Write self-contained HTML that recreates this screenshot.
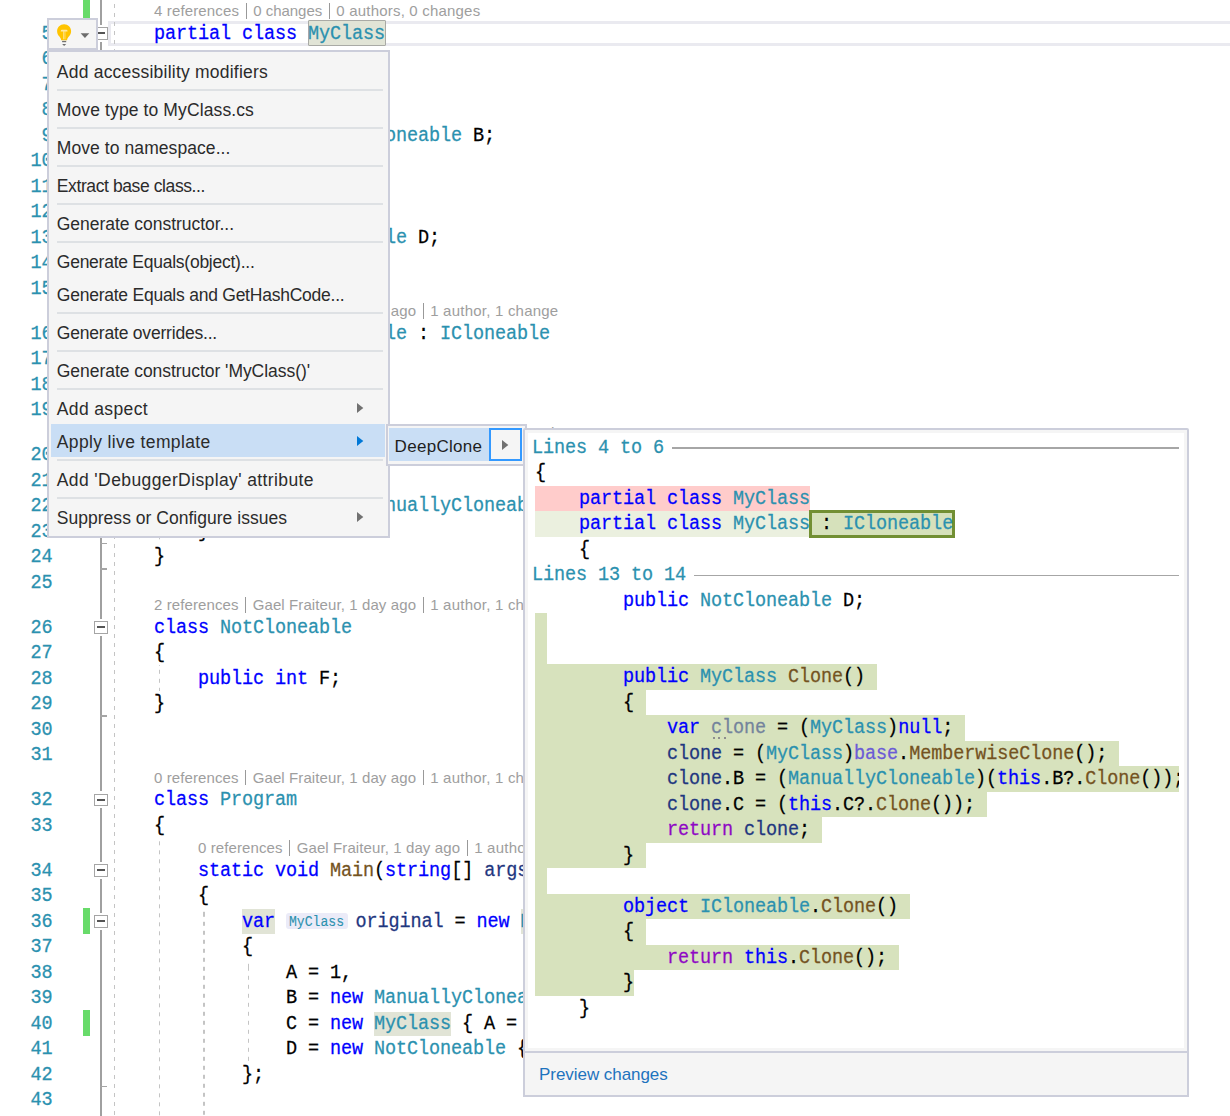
<!DOCTYPE html><html><head><meta charset="utf-8"><style>
html,body{margin:0;padding:0;background:#fff;width:1230px;height:1116px;overflow:hidden;position:relative}
.m{position:absolute;font-family:'Liberation Mono',monospace;line-height:1;white-space:pre;color:#000;-webkit-text-stroke:0.25px currentColor}
.s{position:absolute;font-family:'Liberation Sans',sans-serif;line-height:1;white-space:pre}
.r{position:absolute}
</style></head><body>
<div class="r" style="left:108px;top:21px;width:1130px;height:19px;border:3px solid #EAEAF0;border-right:none"></div>
<div class="r" style="left:307.5px;top:20px;width:76px;height:24px;background:#E1E4D6;border:1px solid #A9AAA5;border-radius:1px"></div>
<div class="r" style="left:242.00px;top:908.70px;width:33.00px;height:25.00px;background:#E1E4D6;"></div>
<div class="r" style="left:374.00px;top:1011.70px;width:77.00px;height:24.00px;background:#E1E4D6;"></div>
<div class="r" style="left:520.50px;top:908.70px;width:39.50px;height:25.00px;background:#E1E4D6;"></div>
<div class="r" style="left:286.00px;top:912.70px;width:62.00px;height:16.70px;background:#EBEBF8;border-radius:3px"></div>
<div class="m" style="left:289.00px;top:915.56px;font-size:13.1px;letter-spacing:0.000px;transform:scaleY(1.07);transform-origin:0 10.04px;-webkit-text-stroke:0.1px currentColor"><span style="color:#2B91AF">MyClass</span></div>
<div class="m" style="left:41.50px;top:25.73px;font-size:18.5px;letter-spacing:-0.100px;transform:scaleY(1.07);transform-origin:0 14.17px;"><span style="color:#2B91AF">5</span></div>
<div class="m" style="left:41.50px;top:51.23px;font-size:18.5px;letter-spacing:-0.100px;transform:scaleY(1.07);transform-origin:0 14.17px;"><span style="color:#2B91AF">6</span></div>
<div class="m" style="left:41.50px;top:76.73px;font-size:18.5px;letter-spacing:-0.100px;transform:scaleY(1.07);transform-origin:0 14.17px;"><span style="color:#2B91AF">7</span></div>
<div class="m" style="left:41.50px;top:102.23px;font-size:18.5px;letter-spacing:-0.100px;transform:scaleY(1.07);transform-origin:0 14.17px;"><span style="color:#2B91AF">8</span></div>
<div class="m" style="left:41.50px;top:127.73px;font-size:18.5px;letter-spacing:-0.100px;transform:scaleY(1.07);transform-origin:0 14.17px;"><span style="color:#2B91AF">9</span></div>
<div class="m" style="left:30.50px;top:153.23px;font-size:18.5px;letter-spacing:-0.100px;transform:scaleY(1.07);transform-origin:0 14.17px;"><span style="color:#2B91AF">10</span></div>
<div class="m" style="left:30.50px;top:178.73px;font-size:18.5px;letter-spacing:-0.100px;transform:scaleY(1.07);transform-origin:0 14.17px;"><span style="color:#2B91AF">11</span></div>
<div class="m" style="left:30.50px;top:204.23px;font-size:18.5px;letter-spacing:-0.100px;transform:scaleY(1.07);transform-origin:0 14.17px;"><span style="color:#2B91AF">12</span></div>
<div class="m" style="left:30.50px;top:229.73px;font-size:18.5px;letter-spacing:-0.100px;transform:scaleY(1.07);transform-origin:0 14.17px;"><span style="color:#2B91AF">13</span></div>
<div class="m" style="left:30.50px;top:255.23px;font-size:18.5px;letter-spacing:-0.100px;transform:scaleY(1.07);transform-origin:0 14.17px;"><span style="color:#2B91AF">14</span></div>
<div class="m" style="left:30.50px;top:280.73px;font-size:18.5px;letter-spacing:-0.100px;transform:scaleY(1.07);transform-origin:0 14.17px;"><span style="color:#2B91AF">15</span></div>
<div class="m" style="left:30.50px;top:325.73px;font-size:18.5px;letter-spacing:-0.100px;transform:scaleY(1.07);transform-origin:0 14.17px;"><span style="color:#2B91AF">16</span></div>
<div class="m" style="left:30.50px;top:351.23px;font-size:18.5px;letter-spacing:-0.100px;transform:scaleY(1.07);transform-origin:0 14.17px;"><span style="color:#2B91AF">17</span></div>
<div class="m" style="left:30.50px;top:376.73px;font-size:18.5px;letter-spacing:-0.100px;transform:scaleY(1.07);transform-origin:0 14.17px;"><span style="color:#2B91AF">18</span></div>
<div class="m" style="left:30.50px;top:402.23px;font-size:18.5px;letter-spacing:-0.100px;transform:scaleY(1.07);transform-origin:0 14.17px;"><span style="color:#2B91AF">19</span></div>
<div class="m" style="left:30.50px;top:447.23px;font-size:18.5px;letter-spacing:-0.100px;transform:scaleY(1.07);transform-origin:0 14.17px;"><span style="color:#2B91AF">20</span></div>
<div class="m" style="left:30.50px;top:472.73px;font-size:18.5px;letter-spacing:-0.100px;transform:scaleY(1.07);transform-origin:0 14.17px;"><span style="color:#2B91AF">21</span></div>
<div class="m" style="left:30.50px;top:498.23px;font-size:18.5px;letter-spacing:-0.100px;transform:scaleY(1.07);transform-origin:0 14.17px;"><span style="color:#2B91AF">22</span></div>
<div class="m" style="left:30.50px;top:523.73px;font-size:18.5px;letter-spacing:-0.100px;transform:scaleY(1.07);transform-origin:0 14.17px;"><span style="color:#2B91AF">23</span></div>
<div class="m" style="left:30.50px;top:549.23px;font-size:18.5px;letter-spacing:-0.100px;transform:scaleY(1.07);transform-origin:0 14.17px;"><span style="color:#2B91AF">24</span></div>
<div class="m" style="left:30.50px;top:574.73px;font-size:18.5px;letter-spacing:-0.100px;transform:scaleY(1.07);transform-origin:0 14.17px;"><span style="color:#2B91AF">25</span></div>
<div class="m" style="left:30.50px;top:619.73px;font-size:18.5px;letter-spacing:-0.100px;transform:scaleY(1.07);transform-origin:0 14.17px;"><span style="color:#2B91AF">26</span></div>
<div class="m" style="left:30.50px;top:645.23px;font-size:18.5px;letter-spacing:-0.100px;transform:scaleY(1.07);transform-origin:0 14.17px;"><span style="color:#2B91AF">27</span></div>
<div class="m" style="left:30.50px;top:670.73px;font-size:18.5px;letter-spacing:-0.100px;transform:scaleY(1.07);transform-origin:0 14.17px;"><span style="color:#2B91AF">28</span></div>
<div class="m" style="left:30.50px;top:696.23px;font-size:18.5px;letter-spacing:-0.100px;transform:scaleY(1.07);transform-origin:0 14.17px;"><span style="color:#2B91AF">29</span></div>
<div class="m" style="left:30.50px;top:721.73px;font-size:18.5px;letter-spacing:-0.100px;transform:scaleY(1.07);transform-origin:0 14.17px;"><span style="color:#2B91AF">30</span></div>
<div class="m" style="left:30.50px;top:747.23px;font-size:18.5px;letter-spacing:-0.100px;transform:scaleY(1.07);transform-origin:0 14.17px;"><span style="color:#2B91AF">31</span></div>
<div class="m" style="left:30.50px;top:792.23px;font-size:18.5px;letter-spacing:-0.100px;transform:scaleY(1.07);transform-origin:0 14.17px;"><span style="color:#2B91AF">32</span></div>
<div class="m" style="left:30.50px;top:817.73px;font-size:18.5px;letter-spacing:-0.100px;transform:scaleY(1.07);transform-origin:0 14.17px;"><span style="color:#2B91AF">33</span></div>
<div class="m" style="left:30.50px;top:862.73px;font-size:18.5px;letter-spacing:-0.100px;transform:scaleY(1.07);transform-origin:0 14.17px;"><span style="color:#2B91AF">34</span></div>
<div class="m" style="left:30.50px;top:888.23px;font-size:18.5px;letter-spacing:-0.100px;transform:scaleY(1.07);transform-origin:0 14.17px;"><span style="color:#2B91AF">35</span></div>
<div class="m" style="left:30.50px;top:913.73px;font-size:18.5px;letter-spacing:-0.100px;transform:scaleY(1.07);transform-origin:0 14.17px;"><span style="color:#2B91AF">36</span></div>
<div class="m" style="left:30.50px;top:939.23px;font-size:18.5px;letter-spacing:-0.100px;transform:scaleY(1.07);transform-origin:0 14.17px;"><span style="color:#2B91AF">37</span></div>
<div class="m" style="left:30.50px;top:964.73px;font-size:18.5px;letter-spacing:-0.100px;transform:scaleY(1.07);transform-origin:0 14.17px;"><span style="color:#2B91AF">38</span></div>
<div class="m" style="left:30.50px;top:990.23px;font-size:18.5px;letter-spacing:-0.100px;transform:scaleY(1.07);transform-origin:0 14.17px;"><span style="color:#2B91AF">39</span></div>
<div class="m" style="left:30.50px;top:1015.73px;font-size:18.5px;letter-spacing:-0.100px;transform:scaleY(1.07);transform-origin:0 14.17px;"><span style="color:#2B91AF">40</span></div>
<div class="m" style="left:30.50px;top:1041.23px;font-size:18.5px;letter-spacing:-0.100px;transform:scaleY(1.07);transform-origin:0 14.17px;"><span style="color:#2B91AF">41</span></div>
<div class="m" style="left:30.50px;top:1066.73px;font-size:18.5px;letter-spacing:-0.100px;transform:scaleY(1.07);transform-origin:0 14.17px;"><span style="color:#2B91AF">42</span></div>
<div class="m" style="left:30.50px;top:1092.23px;font-size:18.5px;letter-spacing:-0.100px;transform:scaleY(1.07);transform-origin:0 14.17px;"><span style="color:#2B91AF">43</span></div>
<div class="m" style="left:154.00px;top:25.73px;font-size:18.5px;letter-spacing:-0.100px;transform:scaleY(1.07);transform-origin:0 14.17px;"><span style="color:#0000FF">partial</span> <span style="color:#0000FF">class</span> <span style="color:#2B91AF">MyClass</span></div>
<div class="s" style="left:154.00px;top:3.40px;font-size:15px;color:#9E9E9E;"><span style="letter-spacing:0.142px">4 references</span><span style="display:inline-block;width:1.1px;height:15.3px;background:#999999;margin:0 6.2px 0 6.8px;vertical-align:-2px;letter-spacing:0"></span><span style="letter-spacing:-0.015px">0 changes</span><span style="display:inline-block;width:1.1px;height:15.3px;background:#999999;margin:0 6.2px 0 6.8px;vertical-align:-2px;letter-spacing:0"></span><span style="letter-spacing:0.195px">0 authors, 0 changes</span></div>
<div class="m" style="left:154.00px;top:76.73px;font-size:18.5px;letter-spacing:-0.100px;transform:scaleY(1.07);transform-origin:0 14.17px;">    <span style="color:#0000FF">public</span> <span style="color:#0000FF">int</span><span style="color:#000000"> A;</span></div>
<div class="m" style="left:154.00px;top:127.73px;font-size:18.5px;letter-spacing:-0.100px;transform:scaleY(1.07);transform-origin:0 14.17px;">    <span style="color:#0000FF">public</span> <span style="color:#2B91AF">ManuallyCloneable</span><span style="color:#000000"> B;</span></div>
<div class="m" style="left:154.00px;top:178.73px;font-size:18.5px;letter-spacing:-0.100px;transform:scaleY(1.07);transform-origin:0 14.17px;">    <span style="color:#0000FF">public</span> <span style="color:#2B91AF">MyClass</span><span style="color:#000000"> C;</span></div>
<div class="m" style="left:154.00px;top:229.73px;font-size:18.5px;letter-spacing:-0.100px;transform:scaleY(1.07);transform-origin:0 14.17px;">    <span style="color:#0000FF">public</span> <span style="color:#2B91AF">NotCloneable</span><span style="color:#000000"> D;</span></div>
<div class="m" style="left:154.00px;top:255.23px;font-size:18.5px;letter-spacing:-0.100px;transform:scaleY(1.07);transform-origin:0 14.17px;"><span style="color:#000000">}</span></div>
<div class="m" style="left:154.00px;top:325.73px;font-size:18.5px;letter-spacing:-0.100px;transform:scaleY(1.07);transform-origin:0 14.17px;"><span style="color:#0000FF">class</span> <span style="color:#2B91AF">ManuallyCloneable</span><span style="color:#000000"> : </span><span style="color:#2B91AF">ICloneable</span></div>
<div class="s" style="left:154.00px;top:303.40px;font-size:15px;color:#9E9E9E;"><span style="letter-spacing:0.101px">2 references</span><span style="display:inline-block;width:1.1px;height:15.3px;background:#999999;margin:0 6.2px 0 6.8px;vertical-align:-2px;letter-spacing:0"></span><span style="letter-spacing:0.103px">Gael Fraiteur, 1 day ago</span><span style="display:inline-block;width:1.1px;height:15.3px;background:#999999;margin:0 6.2px 0 6.8px;vertical-align:-2px;letter-spacing:0"></span><span style="letter-spacing:0.223px">1 author, 1 change</span></div>
<div class="m" style="left:154.00px;top:351.23px;font-size:18.5px;letter-spacing:-0.100px;transform:scaleY(1.07);transform-origin:0 14.17px;"><span style="color:#000000">{</span></div>
<div class="m" style="left:154.00px;top:376.73px;font-size:18.5px;letter-spacing:-0.100px;transform:scaleY(1.07);transform-origin:0 14.17px;">    <span style="color:#0000FF">public</span> <span style="color:#0000FF">int</span><span style="color:#000000"> E;</span></div>
<div class="m" style="left:154.00px;top:447.23px;font-size:18.5px;letter-spacing:-0.100px;transform:scaleY(1.07);transform-origin:0 14.17px;">    <span style="color:#0000FF">public</span> <span style="color:#0000FF">object</span> <span style="color:#74531F">Clone</span><span style="color:#000000">()</span></div>
<div class="s" style="left:198.00px;top:424.90px;font-size:15px;color:#9E9E9E;"><span style="letter-spacing:0.000px">1 reference</span><span style="display:inline-block;width:1.1px;height:15.3px;background:#999999;margin:0 6.2px 0 6.8px;vertical-align:-2px;letter-spacing:0"></span><span style="letter-spacing:0.103px">Gael Fraiteur, 1 day ago</span><span style="display:inline-block;width:1.1px;height:15.3px;background:#999999;margin:0 6.2px 0 6.8px;vertical-align:-2px;letter-spacing:0"></span><span style="letter-spacing:0.223px">1 author, 1 change</span></div>
<div class="m" style="left:154.00px;top:472.73px;font-size:18.5px;letter-spacing:-0.100px;transform:scaleY(1.07);transform-origin:0 14.17px;">    <span style="color:#000000">{</span></div>
<div class="m" style="left:154.00px;top:498.23px;font-size:18.5px;letter-spacing:-0.100px;transform:scaleY(1.07);transform-origin:0 14.17px;">        <span style="color:#8F08C4">return</span> <span style="color:#0000FF">new</span> <span style="color:#2B91AF">ManuallyCloneable</span><span style="color:#000000">();</span></div>
<div class="m" style="left:154.00px;top:523.73px;font-size:18.5px;letter-spacing:-0.100px;transform:scaleY(1.07);transform-origin:0 14.17px;">    <span style="color:#000000">}</span></div>
<div class="m" style="left:154.00px;top:549.23px;font-size:18.5px;letter-spacing:-0.100px;transform:scaleY(1.07);transform-origin:0 14.17px;"><span style="color:#000000">}</span></div>
<div class="m" style="left:154.00px;top:619.73px;font-size:18.5px;letter-spacing:-0.100px;transform:scaleY(1.07);transform-origin:0 14.17px;"><span style="color:#0000FF">class</span> <span style="color:#2B91AF">NotCloneable</span></div>
<div class="s" style="left:154.00px;top:597.40px;font-size:15px;color:#9E9E9E;"><span style="letter-spacing:0.101px">2 references</span><span style="display:inline-block;width:1.1px;height:15.3px;background:#999999;margin:0 6.2px 0 6.8px;vertical-align:-2px;letter-spacing:0"></span><span style="letter-spacing:0.103px">Gael Fraiteur, 1 day ago</span><span style="display:inline-block;width:1.1px;height:15.3px;background:#999999;margin:0 6.2px 0 6.8px;vertical-align:-2px;letter-spacing:0"></span><span style="letter-spacing:0.223px">1 author, 1 change</span></div>
<div class="m" style="left:154.00px;top:645.23px;font-size:18.5px;letter-spacing:-0.100px;transform:scaleY(1.07);transform-origin:0 14.17px;"><span style="color:#000000">{</span></div>
<div class="m" style="left:154.00px;top:670.73px;font-size:18.5px;letter-spacing:-0.100px;transform:scaleY(1.07);transform-origin:0 14.17px;">    <span style="color:#0000FF">public</span> <span style="color:#0000FF">int</span><span style="color:#000000"> F;</span></div>
<div class="m" style="left:154.00px;top:696.23px;font-size:18.5px;letter-spacing:-0.100px;transform:scaleY(1.07);transform-origin:0 14.17px;"><span style="color:#000000">}</span></div>
<div class="m" style="left:154.00px;top:792.23px;font-size:18.5px;letter-spacing:-0.100px;transform:scaleY(1.07);transform-origin:0 14.17px;"><span style="color:#0000FF">class</span> <span style="color:#2B91AF">Program</span></div>
<div class="s" style="left:154.00px;top:769.90px;font-size:15px;color:#9E9E9E;"><span style="letter-spacing:0.101px">0 references</span><span style="display:inline-block;width:1.1px;height:15.3px;background:#999999;margin:0 6.2px 0 6.8px;vertical-align:-2px;letter-spacing:0"></span><span style="letter-spacing:0.103px">Gael Fraiteur, 1 day ago</span><span style="display:inline-block;width:1.1px;height:15.3px;background:#999999;margin:0 6.2px 0 6.8px;vertical-align:-2px;letter-spacing:0"></span><span style="letter-spacing:0.223px">1 author, 1 change</span></div>
<div class="m" style="left:154.00px;top:817.73px;font-size:18.5px;letter-spacing:-0.100px;transform:scaleY(1.07);transform-origin:0 14.17px;"><span style="color:#000000">{</span></div>
<div class="m" style="left:154.00px;top:862.73px;font-size:18.5px;letter-spacing:-0.100px;transform:scaleY(1.07);transform-origin:0 14.17px;">    <span style="color:#0000FF">static</span> <span style="color:#0000FF">void</span> <span style="color:#74531F">Main</span><span style="color:#000000">(</span><span style="color:#0000FF">string</span><span style="color:#000000">[] </span><span style="color:#1F377F">args</span><span style="color:#000000">)</span></div>
<div class="s" style="left:198.00px;top:840.40px;font-size:15px;color:#9E9E9E;"><span style="letter-spacing:0.101px">0 references</span><span style="display:inline-block;width:1.1px;height:15.3px;background:#999999;margin:0 6.2px 0 6.8px;vertical-align:-2px;letter-spacing:0"></span><span style="letter-spacing:0.103px">Gael Fraiteur, 1 day ago</span><span style="display:inline-block;width:1.1px;height:15.3px;background:#999999;margin:0 6.2px 0 6.8px;vertical-align:-2px;letter-spacing:0"></span><span style="letter-spacing:0.223px">1 author, 1 change</span></div>
<div class="m" style="left:154.00px;top:888.23px;font-size:18.5px;letter-spacing:-0.100px;transform:scaleY(1.07);transform-origin:0 14.17px;">    <span style="color:#000000">{</span></div>
<div class="m" style="left:154.00px;top:913.73px;font-size:18.5px;letter-spacing:-0.100px;transform:scaleY(1.07);transform-origin:0 14.17px;">        <span style="color:#0000FF">var</span></div>
<div class="m" style="left:154.00px;top:939.23px;font-size:18.5px;letter-spacing:-0.100px;transform:scaleY(1.07);transform-origin:0 14.17px;">        <span style="color:#000000">{</span></div>
<div class="m" style="left:154.00px;top:964.73px;font-size:18.5px;letter-spacing:-0.100px;transform:scaleY(1.07);transform-origin:0 14.17px;">            <span style="color:#000000">A = 1,</span></div>
<div class="m" style="left:154.00px;top:990.23px;font-size:18.5px;letter-spacing:-0.100px;transform:scaleY(1.07);transform-origin:0 14.17px;">            <span style="color:#000000">B = </span><span style="color:#0000FF">new</span> <span style="color:#2B91AF">ManuallyCloneable</span><span style="color:#000000"> { A = 2 },</span></div>
<div class="m" style="left:154.00px;top:1015.73px;font-size:18.5px;letter-spacing:-0.100px;transform:scaleY(1.07);transform-origin:0 14.17px;">            <span style="color:#000000">C = </span><span style="color:#0000FF">new</span> <span style="color:#2B91AF">MyClass</span><span style="color:#000000"> { A = 3 },</span></div>
<div class="m" style="left:154.00px;top:1041.23px;font-size:18.5px;letter-spacing:-0.100px;transform:scaleY(1.07);transform-origin:0 14.17px;">            <span style="color:#000000">D = </span><span style="color:#0000FF">new</span> <span style="color:#2B91AF">NotCloneable</span><span style="color:#000000"> { F = 4 }</span></div>
<div class="m" style="left:154.00px;top:1066.73px;font-size:18.5px;letter-spacing:-0.100px;transform:scaleY(1.07);transform-origin:0 14.17px;">        <span style="color:#000000">};</span></div>
<div class="r" style="left:83.00px;top:0.00px;width:7.00px;height:18.00px;background:#68DB6A;"></div>
<div class="r" style="left:83.00px;top:908.20px;width:7.00px;height:25.50px;background:#68DB6A;"></div>
<div class="r" style="left:83.00px;top:1010.20px;width:7.00px;height:25.50px;background:#68DB6A;"></div>
<div class="r" style="left:100.40px;top:0.00px;width:1.50px;height:1116.00px;background:#A0A0A0;"></div>
<div class="r" style="left:99.00px;top:24.50px;width:4.50px;height:17.20px;background:#FFFFFF;"></div>
<div class="r" style="left:94px;top:27.20px;width:11.5px;height:10.6px;border:1px solid #A5A5A5;background:#fff"></div>
<div class="r" style="left:97.20px;top:32.30px;width:7.70px;height:1.80px;background:#555555;"></div>
<div class="r" style="left:99.00px;top:618.50px;width:4.50px;height:17.20px;background:#FFFFFF;"></div>
<div class="r" style="left:94px;top:621.20px;width:11.5px;height:10.6px;border:1px solid #A5A5A5;background:#fff"></div>
<div class="r" style="left:97.20px;top:626.30px;width:7.70px;height:1.80px;background:#555555;"></div>
<div class="r" style="left:99.00px;top:791.00px;width:4.50px;height:17.20px;background:#FFFFFF;"></div>
<div class="r" style="left:94px;top:793.70px;width:11.5px;height:10.6px;border:1px solid #A5A5A5;background:#fff"></div>
<div class="r" style="left:97.20px;top:798.80px;width:7.70px;height:1.80px;background:#555555;"></div>
<div class="r" style="left:99.00px;top:861.50px;width:4.50px;height:17.20px;background:#FFFFFF;"></div>
<div class="r" style="left:94px;top:864.20px;width:11.5px;height:10.6px;border:1px solid #A5A5A5;background:#fff"></div>
<div class="r" style="left:97.20px;top:869.30px;width:7.70px;height:1.80px;background:#555555;"></div>
<div class="r" style="left:99.00px;top:912.50px;width:4.50px;height:17.20px;background:#FFFFFF;"></div>
<div class="r" style="left:94px;top:915.20px;width:11.5px;height:10.6px;border:1px solid #A5A5A5;background:#fff"></div>
<div class="r" style="left:97.20px;top:920.30px;width:7.70px;height:1.80px;background:#555555;"></div>
<div class="r" style="left:100.00px;top:542.90px;width:7.00px;height:1.20px;background:#A5A5A5;"></div>
<div class="r" style="left:100.00px;top:568.40px;width:7.00px;height:1.20px;background:#A5A5A5;"></div>
<div class="r" style="left:100.00px;top:715.40px;width:7.00px;height:1.20px;background:#A5A5A5;"></div>
<div class="r" style="left:100.00px;top:1085.90px;width:7.00px;height:1.20px;background:#A5A5A5;"></div>
<div class="r" style="left:113.50px;top:0.00px;width:1.5px;height:1116.00px;background:repeating-linear-gradient(to bottom,#C4C4C4 0,#C4C4C4 4.5px,transparent 4.5px,transparent 9px);background-position:0 4.00px"></div>
<div class="r" style="left:158.50px;top:665.20px;width:1.5px;height:25.50px;background:repeating-linear-gradient(to bottom,#C4C4C4 0,#C4C4C4 4.5px,transparent 4.5px,transparent 9px);background-position:0 4.80px"></div>
<div class="r" style="left:158.50px;top:837.70px;width:1.5px;height:278.30px;background:repeating-linear-gradient(to bottom,#C4C4C4 0,#C4C4C4 4.5px,transparent 4.5px,transparent 9px);background-position:0 3.30px"></div>
<div class="r" style="left:203.00px;top:908.20px;width:1.5px;height:207.80px;background:repeating-linear-gradient(to bottom,#C4C4C4 0,#C4C4C4 4.5px,transparent 4.5px,transparent 9px);background-position:0 4.80px"></div>
<div class="r" style="left:247.50px;top:959.20px;width:1.5px;height:102.00px;background:repeating-linear-gradient(to bottom,#C4C4C4 0,#C4C4C4 4.5px,transparent 4.5px,transparent 9px);background-position:0 7.80px"></div>
<div class="r" style="left:158.50px;top:492.70px;width:1.5px;height:51.00px;background:repeating-linear-gradient(to bottom,#C4C4C4 0,#C4C4C4 4.5px,transparent 4.5px,transparent 9px);background-position:0 6.30px"></div>
<div class="m" style="left:355.50px;top:913.73px;font-size:18.5px;letter-spacing:-0.100px;transform:scaleY(1.07);transform-origin:0 14.17px;"><span style="color:#1F377F">original</span><span style="color:#000000"> = </span><span style="color:#0000FF">new</span> <span style="color:#2B91AF">MyClass</span><span style="color:#000000">()</span></div>
<div class="r" style="left:47px;top:18px;width:47px;height:28px;background:#F5F5F5;border:2px solid #CCCEDB"></div>
<svg class="r" style="left:54px;top:22px" width="40" height="28" viewBox="0 0 40 28">
<path d="M10.1 2.3c-3.9 0-7 3-7 6.9 0 2.4 1.2 4.1 2.5 5.6 1 1.1 1.5 2.2 1.6 3.4h5.8c.1-1.2.6-2.3 1.6-3.4 1.3-1.5 2.5-3.2 2.5-5.6 0-3.9-3.1-6.9-7-6.9z" fill="#FFC400"/>
<path d="M6.8 8.9q0-1.2 1.2-1.2h4.3q1.2 0 1.2 1.2v.6h-2.2v7.7h-.7v-7.7h-.9v7.7h-.7v-7.7h-2.2z" fill="#FFE9A6"/>
<rect x="8.1" y="18.9" width="4.1" height="1.3" fill="#707070"/>
<path d="M8.1 22h4.1l-2.05 1.9z" fill="#707070"/>
<path d="M26.6 11.2h8.7l-4.35 4.9z" fill="#6D6D6D"/>
</svg>
<div class="r" style="left:47px;top:50px;width:339px;height:484px;background:#F5F5F5;border:2px solid #CCCEDB"></div>
<div class="s" style="left:56.80px;top:63.58px;font-size:17.5px;color:#2B2B2B;letter-spacing:0.222px">Add accessibility modifiers</div>
<div class="r" style="left:57.00px;top:89.00px;width:326.00px;height:2.00px;background:#DEE1E4;"></div>
<div class="s" style="left:56.80px;top:101.58px;font-size:17.5px;color:#2B2B2B;letter-spacing:0.117px">Move type to MyClass.cs</div>
<div class="r" style="left:57.00px;top:127.00px;width:326.00px;height:2.00px;background:#DEE1E4;"></div>
<div class="s" style="left:56.80px;top:139.58px;font-size:17.5px;color:#2B2B2B;letter-spacing:0.076px">Move to namespace...</div>
<div class="r" style="left:57.00px;top:165.00px;width:326.00px;height:2.00px;background:#DEE1E4;"></div>
<div class="s" style="left:56.80px;top:177.58px;font-size:17.5px;color:#2B2B2B;letter-spacing:-0.400px">Extract base class...</div>
<div class="r" style="left:57.00px;top:203.00px;width:326.00px;height:2.00px;background:#DEE1E4;"></div>
<div class="s" style="left:56.80px;top:215.58px;font-size:17.5px;color:#2B2B2B;letter-spacing:-0.035px">Generate constructor...</div>
<div class="r" style="left:57.00px;top:241.00px;width:326.00px;height:2.00px;background:#DEE1E4;"></div>
<div class="s" style="left:56.80px;top:253.58px;font-size:17.5px;color:#2B2B2B;letter-spacing:-0.253px">Generate Equals(object)...</div>
<div class="s" style="left:56.80px;top:286.58px;font-size:17.5px;color:#2B2B2B;letter-spacing:-0.240px">Generate Equals and GetHashCode...</div>
<div class="r" style="left:57.00px;top:312.00px;width:326.00px;height:2.00px;background:#DEE1E4;"></div>
<div class="s" style="left:56.80px;top:324.58px;font-size:17.5px;color:#2B2B2B;letter-spacing:-0.200px">Generate overrides...</div>
<div class="r" style="left:57.00px;top:350.00px;width:326.00px;height:2.00px;background:#DEE1E4;"></div>
<div class="s" style="left:56.80px;top:362.58px;font-size:17.5px;color:#2B2B2B;letter-spacing:-0.046px">Generate constructor &#x27;MyClass()&#x27;</div>
<div class="r" style="left:57.00px;top:388.00px;width:326.00px;height:2.00px;background:#DEE1E4;"></div>
<div class="s" style="left:56.80px;top:400.58px;font-size:17.5px;color:#2B2B2B;letter-spacing:0.364px">Add aspect</div>
<svg class="r" style="left:357px;top:402.50px" width="7" height="10"><path d="M0 0L6.3 5L0 10z" fill="#717171"/></svg>
<div class="r" style="left:51.00px;top:424.00px;width:334.30px;height:33.00px;background:#C9DEF5;"></div>
<div class="s" style="left:56.80px;top:433.58px;font-size:17.5px;color:#2B2B2B;letter-spacing:0.364px">Apply live template</div>
<svg class="r" style="left:357px;top:435.50px" width="7" height="10"><path d="M0 0L6.3 5L0 10z" fill="#0078D7"/></svg>
<div class="r" style="left:57.00px;top:459.00px;width:326.00px;height:2.00px;background:#DEE1E4;"></div>
<div class="s" style="left:56.80px;top:471.58px;font-size:17.5px;color:#2B2B2B;letter-spacing:0.393px">Add &#x27;DebuggerDisplay&#x27; attribute</div>
<div class="r" style="left:57.00px;top:497.00px;width:326.00px;height:2.00px;background:#DEE1E4;"></div>
<div class="s" style="left:56.80px;top:509.58px;font-size:17.5px;color:#2B2B2B;letter-spacing:0.023px">Suppress or Configure issues</div>
<svg class="r" style="left:357px;top:511.50px" width="7" height="10"><path d="M0 0L6.3 5L0 10z" fill="#717171"/></svg>
<div class="r" style="left:385.5px;top:424px;width:137.5px;height:37.5px;background:#F5F5F5;border:2px solid #CCCEDB"></div>
<div class="r" style="left:389.00px;top:428.00px;width:100.00px;height:33.00px;background:#C9DEF5;"></div>
<div class="r" style="left:489px;top:428px;width:29px;height:29px;background:#F5F5F5;border:2px solid #3399FF"></div>
<svg class="r" style="left:502px;top:440px" width="7" height="10"><path d="M0 0L6.3 5L0 10z" fill="#717171"/></svg>
<div class="s" style="left:394.60px;top:438.11px;font-size:17px;color:#1E1E1E;letter-spacing:0.3px">DeepClone</div>
<div class="r" style="left:523px;top:428px;width:662px;height:665px;background:#F5F5F5;border:2px solid #CCCEDB;border-radius:2px 2px 0 0"></div>
<div class="r" style="left:527.5px;top:433px;width:656.8px;height:615px;background:#FFFFFF"></div>
<div class="r" style="left:527px;top:433px;width:652px;height:615px;overflow:hidden">
<div class="r" style="left:8.00px;top:53.00px;width:275.00px;height:25.00px;background:#FFCCCB;"></div>
<div class="r" style="left:8.00px;top:78.00px;width:275.00px;height:26.00px;background:#EBF0DF;"></div>
<div class="r" style="left:8.00px;top:180.00px;width:12.00px;height:26.00px;background:#D7E2BD;"></div>
<div class="r" style="left:8.00px;top:206.00px;width:12.00px;height:25.00px;background:#D7E2BD;"></div>
<div class="r" style="left:8.00px;top:231.00px;width:342.00px;height:26.00px;background:#D7E2BD;"></div>
<div class="r" style="left:8.00px;top:257.00px;width:111.00px;height:25.00px;background:#D7E2BD;"></div>
<div class="r" style="left:8.00px;top:282.00px;width:430.00px;height:26.00px;background:#D7E2BD;"></div>
<div class="r" style="left:8.00px;top:308.00px;width:584.00px;height:25.00px;background:#D7E2BD;"></div>
<div class="r" style="left:8.00px;top:333.00px;width:644.00px;height:26.00px;background:#D7E2BD;"></div>
<div class="r" style="left:8.00px;top:359.00px;width:452.00px;height:25.00px;background:#D7E2BD;"></div>
<div class="r" style="left:8.00px;top:384.00px;width:287.00px;height:26.00px;background:#D7E2BD;"></div>
<div class="r" style="left:8.00px;top:410.00px;width:111.00px;height:25.00px;background:#D7E2BD;"></div>
<div class="r" style="left:8.00px;top:435.00px;width:12.00px;height:26.00px;background:#D7E2BD;"></div>
<div class="r" style="left:8.00px;top:461.00px;width:375.00px;height:25.00px;background:#D7E2BD;"></div>
<div class="r" style="left:8.00px;top:486.00px;width:111.00px;height:26.00px;background:#D7E2BD;"></div>
<div class="r" style="left:8.00px;top:512.00px;width:364.00px;height:25.00px;background:#D7E2BD;"></div>
<div class="r" style="left:8.00px;top:537.00px;width:99.00px;height:26.00px;background:#D7E2BD;"></div>
<div class="r" style="left:281.50px;top:77.00px;width:140.50px;height:22.20px;background:#D6E1BB;border:3px solid #728F33"></div>
<div class="m" style="left:5.00px;top:6.93px;font-size:18.5px;letter-spacing:-0.100px;transform:scaleY(1.07);transform-origin:0 14.17px;"><span style="color:#2B91AF">Lines 4 to 6</span></div>
<div class="r" style="left:144.50px;top:14.40px;width:507.50px;height:1.50px;background:#A6A6A6;"></div>
<div class="m" style="left:8.00px;top:32.43px;font-size:18.5px;letter-spacing:-0.100px;transform:scaleY(1.07);transform-origin:0 14.17px;"><span style="color:#000000">{</span></div>
<div class="m" style="left:8.00px;top:57.93px;font-size:18.5px;letter-spacing:-0.100px;transform:scaleY(1.07);transform-origin:0 14.17px;">    <span style="color:#0000FF">partial</span> <span style="color:#0000FF">class</span> <span style="color:#2B91AF">MyClass</span></div>
<div class="m" style="left:8.00px;top:83.43px;font-size:18.5px;letter-spacing:-0.100px;transform:scaleY(1.07);transform-origin:0 14.17px;">    <span style="color:#0000FF">partial</span> <span style="color:#0000FF">class</span> <span style="color:#2B91AF">MyClass</span><span style="color:#000000"> : </span><span style="color:#2B91AF">ICloneable</span></div>
<div class="m" style="left:8.00px;top:108.93px;font-size:18.5px;letter-spacing:-0.100px;transform:scaleY(1.07);transform-origin:0 14.17px;"><span style="color:#000000">    {</span></div>
<div class="m" style="left:5.00px;top:134.43px;font-size:18.5px;letter-spacing:-0.100px;transform:scaleY(1.07);transform-origin:0 14.17px;"><span style="color:#2B91AF">Lines 13 to 14</span></div>
<div class="r" style="left:166.50px;top:141.90px;width:485.50px;height:1.50px;background:#A6A6A6;"></div>
<div class="m" style="left:8.00px;top:159.93px;font-size:18.5px;letter-spacing:-0.100px;transform:scaleY(1.07);transform-origin:0 14.17px;">        <span style="color:#0000FF">public</span> <span style="color:#2B91AF">NotCloneable</span><span style="color:#000000"> D;</span></div>
<div class="m" style="left:8.00px;top:236.43px;font-size:18.5px;letter-spacing:-0.100px;transform:scaleY(1.07);transform-origin:0 14.17px;">        <span style="color:#0000FF">public</span> <span style="color:#2B91AF">MyClass</span> <span style="color:#74531F">Clone</span><span style="color:#000000">()</span></div>
<div class="m" style="left:8.00px;top:261.93px;font-size:18.5px;letter-spacing:-0.100px;transform:scaleY(1.07);transform-origin:0 14.17px;"><span style="color:#000000">        {</span></div>
<div class="m" style="left:8.00px;top:287.43px;font-size:18.5px;letter-spacing:-0.100px;transform:scaleY(1.07);transform-origin:0 14.17px;">            <span style="color:#0000FF">var</span> <span style="color:#73839C">clone</span><span style="color:#000000"> = (</span><span style="color:#2B91AF">MyClass</span><span style="color:#000000">)</span><span style="color:#0000FF">null</span><span style="color:#000000">;</span></div>
<div class="m" style="left:8.00px;top:312.93px;font-size:18.5px;letter-spacing:-0.100px;transform:scaleY(1.07);transform-origin:0 14.17px;">            <span style="color:#1F377F">clone</span><span style="color:#000000"> = (</span><span style="color:#2B91AF">MyClass</span><span style="color:#000000">)</span><span style="color:#6B5BD6">base</span><span style="color:#000000">.</span><span style="color:#74531F">MemberwiseClone</span><span style="color:#000000">();</span></div>
<div class="m" style="left:8.00px;top:338.43px;font-size:18.5px;letter-spacing:-0.100px;transform:scaleY(1.07);transform-origin:0 14.17px;">            <span style="color:#1F377F">clone</span><span style="color:#000000">.B = (</span><span style="color:#2B91AF">ManuallyCloneable</span><span style="color:#000000">)(</span><span style="color:#0000FF">this</span><span style="color:#000000">.B?.</span><span style="color:#74531F">Clone</span><span style="color:#000000">());</span></div>
<div class="m" style="left:8.00px;top:363.93px;font-size:18.5px;letter-spacing:-0.100px;transform:scaleY(1.07);transform-origin:0 14.17px;">            <span style="color:#1F377F">clone</span><span style="color:#000000">.C = (</span><span style="color:#0000FF">this</span><span style="color:#000000">.C?.</span><span style="color:#74531F">Clone</span><span style="color:#000000">());</span></div>
<div class="m" style="left:8.00px;top:389.43px;font-size:18.5px;letter-spacing:-0.100px;transform:scaleY(1.07);transform-origin:0 14.17px;">            <span style="color:#8F08C4">return</span> <span style="color:#1F377F">clone</span><span style="color:#000000">;</span></div>
<div class="m" style="left:8.00px;top:414.93px;font-size:18.5px;letter-spacing:-0.100px;transform:scaleY(1.07);transform-origin:0 14.17px;"><span style="color:#000000">        }</span></div>
<div class="m" style="left:8.00px;top:465.93px;font-size:18.5px;letter-spacing:-0.100px;transform:scaleY(1.07);transform-origin:0 14.17px;">        <span style="color:#0000FF">object</span> <span style="color:#2B91AF">ICloneable</span><span style="color:#000000">.</span><span style="color:#74531F">Clone</span><span style="color:#000000">()</span></div>
<div class="m" style="left:8.00px;top:491.43px;font-size:18.5px;letter-spacing:-0.100px;transform:scaleY(1.07);transform-origin:0 14.17px;"><span style="color:#000000">        {</span></div>
<div class="m" style="left:8.00px;top:516.93px;font-size:18.5px;letter-spacing:-0.100px;transform:scaleY(1.07);transform-origin:0 14.17px;">            <span style="color:#8F08C4">return</span> <span style="color:#0000FF">this</span><span style="color:#000000">.</span><span style="color:#74531F">Clone</span><span style="color:#000000">();</span></div>
<div class="m" style="left:8.00px;top:542.43px;font-size:18.5px;letter-spacing:-0.100px;transform:scaleY(1.07);transform-origin:0 14.17px;"><span style="color:#000000">        }</span></div>
<div class="m" style="left:8.00px;top:567.93px;font-size:18.5px;letter-spacing:-0.100px;transform:scaleY(1.07);transform-origin:0 14.17px;"><span style="color:#000000">    }</span></div>
<div class="r" style="left:186.00px;top:304.00px;width:15px;height:2px;background:repeating-linear-gradient(to right,#8E8E8E 0,#8E8E8E 2px,transparent 2px,transparent 5.5px)"></div>
</div>
<div class="r" style="left:525.00px;top:1051.00px;width:662.00px;height:2.00px;background:#CCCEDB;"></div>
<div class="s" style="left:539.00px;top:1065.61px;font-size:17px;color:#1E73BE;letter-spacing:-0.05px">Preview changes</div>
</body></html>
